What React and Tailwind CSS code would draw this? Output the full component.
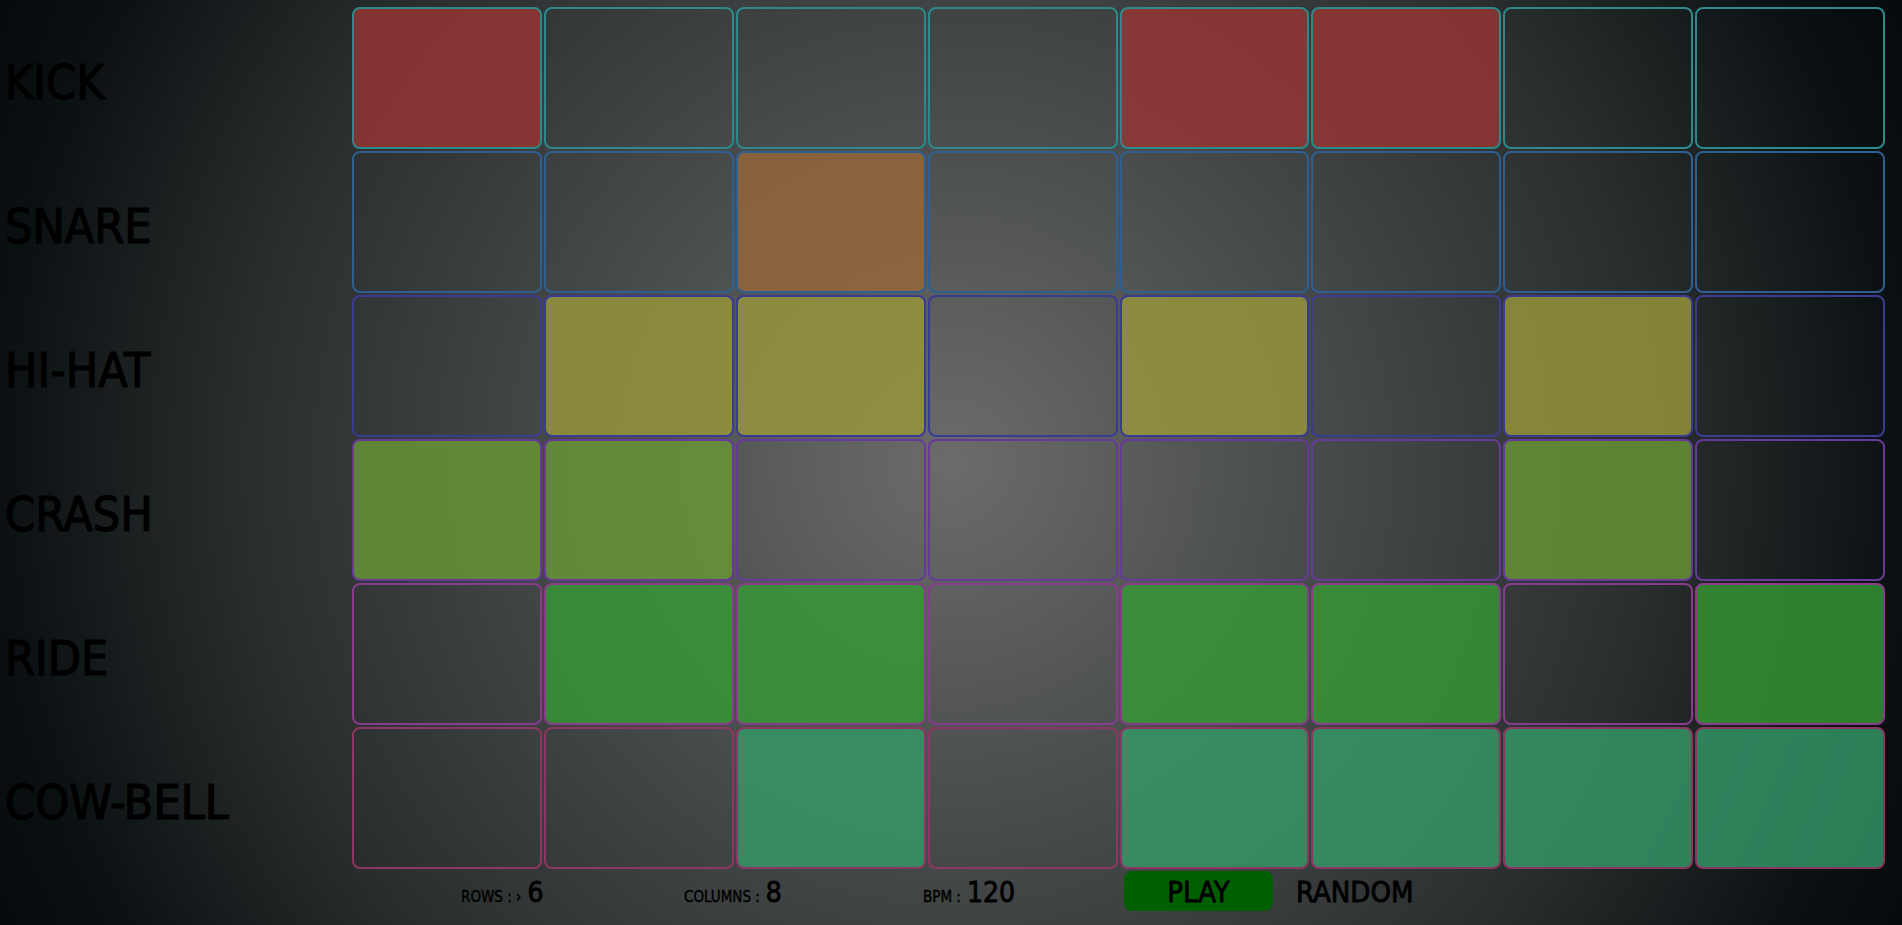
import { useState } from "react";

const rows = [
  { name: "KICK", border: "border-[#2b8a8a]", on: "bg-[#9b3434]/80" },
  { name: "SNARE", border: "border-[#2f5f92]", on: "bg-[#98663a]/80" },
  { name: "HI-HAT", border: "border-[#3a3b92]", on: "bg-[#9a9a3a]/80" },
  { name: "CRASH", border: "border-[#673a9a]", on: "bg-[#699a36]/80" },
  { name: "RIDE", border: "border-[#893b8c]", on: "bg-[#369b35]/80" },
  { name: "COW-BELL", border: "border-[#8c3663]", on: "bg-[#349b69]/80" },
];

const initial = [
  [1, 0, 0, 0, 1, 1, 0, 0],
  [0, 0, 1, 0, 0, 0, 0, 0],
  [0, 1, 1, 0, 1, 0, 1, 0],
  [1, 1, 0, 0, 0, 0, 1, 0],
  [0, 1, 1, 0, 1, 1, 0, 1],
  [0, 0, 1, 0, 1, 1, 1, 1],
];

const App = () => {
  const [grid, setGrid] = useState(initial);
  const [bpm] = useState(120);

  const toggle = (r, c) => {
    setGrid((g) => g.map((row, i) => (i === r ? row.map((v, j) => (j === c ? 1 - v : v)) : row)));
  };

  const randomize = () => {
    setGrid((g) => g.map((row) => row.map(() => (Math.random() > 0.5 ? 1 : 0))));
  };

  return (
    <div
      className="min-h-screen w-full overflow-hidden bg-[radial-gradient(circle_at_center,#6b6b6b_0px,#3e4242_470px,#2a2e2e_700px,#0b1113_950px,#030809_1100px)] text-black"
      style={{ fontFamily: '"DejaVu Sans Condensed", "DejaVu Sans", sans-serif' }}
    >
      <div className="flex pt-[7px]">
        {/* Labels */}
        <div className="flex w-[352px] flex-col gap-[2px]">
          {rows.map((r) => (
            <div
              key={r.name}
              className="flex h-[142px] items-center pl-[5px] pt-[7px] text-[48px] leading-none [-webkit-text-stroke:1.2px_black]"
            >
              {r.name}
            </div>
          ))}
        </div>

        {/* Sequencer grid */}
        <div className="flex flex-col">
          <div className="grid w-[1533px] grid-cols-8 gap-[2px]">
            {grid.map((row, r) =>
              row.map((v, c) => (
                <button
                  key={`${r}-${c}`}
                  onClick={() => toggle(r, c)}
                  className={`h-[142px] rounded-[8px] border-2 ${rows[r].border} ${v ? rows[r].on : "bg-transparent"}`}
                />
              ))
            )}
          </div>

          {/* Controls */}
          <div className="mt-[2px] flex h-[40px] items-center pl-[109px]">
            <div className="flex w-[223px] items-baseline gap-[6px] pt-[6px]">
              <span className="text-[15px] [-webkit-text-stroke:0.4px_black]">ROWS : ›</span>
              <span className="text-[28px] leading-none [-webkit-text-stroke:0.8px_black]">6</span>
            </div>
            <div className="flex w-[239px] items-baseline gap-[6px] pt-[6px]">
              <span className="text-[15px] [-webkit-text-stroke:0.4px_black]">COLUMNS :</span>
              <span className="text-[28px] leading-none [-webkit-text-stroke:0.8px_black]">8</span>
            </div>
            <div className="flex w-[201px] items-baseline gap-[6px] pt-[6px]">
              <span className="text-[15px] [-webkit-text-stroke:0.4px_black]">BPM :</span>
              <span className="text-[28px] leading-none [-webkit-text-stroke:0.8px_black]">{bpm}</span>
            </div>
            <button className="h-[40px] w-[149px] rounded-[8px] bg-[#005f00] pt-[2px] text-[29px] leading-none [-webkit-text-stroke:0.8px_black]">
              PLAY
            </button>
            <button
              onClick={randomize}
              className="ml-[23px] pt-[2px] text-[29px] leading-none [-webkit-text-stroke:0.8px_black]"
            >
              RANDOM
            </button>
          </div>
        </div>
      </div>
    </div>
  );
};

export default App;
